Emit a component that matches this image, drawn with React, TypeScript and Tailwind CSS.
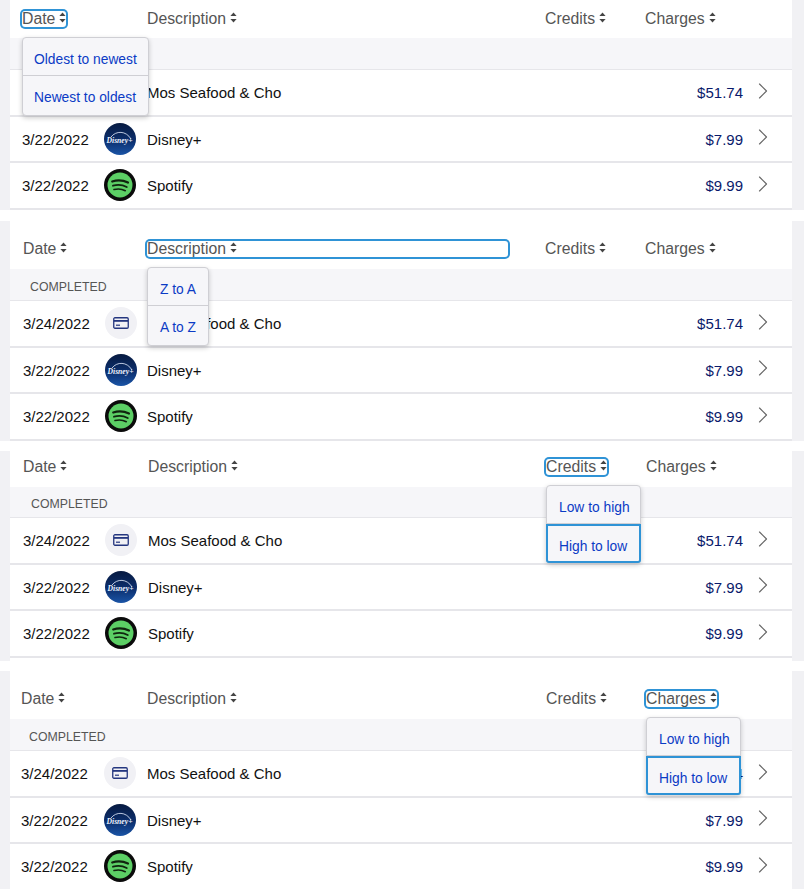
import { ChevronRight } from "lucide-react";

const rows = [
  { date: "3/24/2022", name: "Mos Seafood & Cho", amount: "$51.74", logo: "card" },
  { date: "3/22/2022", name: "Disney+", amount: "$7.99", logo: "disney" },
  { date: "3/22/2022", name: "Spotify", amount: "$9.99", logo: "spotify" },
];

function SortIcon() {
  return (
    <svg width="7" height="11" viewBox="0 0 7 11" className="ml-[4px] mb-[3px] shrink-0">
      <path d="M3.5 0.5 L6.6 4 H0.4 Z" fill="#444" />
      <path d="M3.5 10.5 L6.6 7 H0.4 Z" fill="#444" />
    </svg>
  );
}

function Logo({ kind }: { kind: string }) {
  if (kind === "card") {
    return (
      <div className="flex h-[32px] w-[32px] shrink-0 items-center justify-center rounded-full bg-[#f1f1f5]">
        <svg width="16" height="12" viewBox="0 0 16 12" fill="none">
          <rect x="0.75" y="0.75" width="14.5" height="10.5" rx="1.2" stroke="#24367f" strokeWidth="1.3" />
          <rect x="1" y="3" width="14" height="1.8" fill="#24367f" />
          <rect x="3" y="7.6" width="4" height="1.2" fill="#24367f" />
        </svg>
      </div>
    );
  }
  if (kind === "disney") {
    return (
      <svg width="32" height="32" viewBox="0 0 32 32" className="shrink-0">
        <defs>
          <linearGradient id="disneyBg" x1="0" y1="0" x2="0" y2="1">
            <stop offset="0%" stopColor="#071a40" />
            <stop offset="55%" stopColor="#0c2f6e" />
            <stop offset="100%" stopColor="#1a54a6" />
          </linearGradient>
        </defs>
        <circle cx="16" cy="16" r="16" fill="url(#disneyBg)" />
        <path d="M7 14 C12 7.5 22 7.5 27 16" fill="none" stroke="#e6efff" strokeWidth="0.8" />
        <text x="2.5" y="20" textLength="26" lengthAdjust="spacingAndGlyphs" fontSize="8" fontStyle="italic" fontWeight="700" fontFamily="'Liberation Serif', serif" fill="#eef4ff">
          Disney+
        </text>
      </svg>
    );
  }
  return (
    <svg width="32" height="32" viewBox="0 0 32 32" className="shrink-0">
      <circle cx="16" cy="16" r="16" fill="#0b0b0b" />
      <circle cx="16" cy="16" r="12.5" fill="#5ccf65" />
      <g fill="none" stroke="#10240f" strokeLinecap="round">
        <path d="M8.2 12.5 C13 10.8 19 11 24 13.6" strokeWidth="2.2" />
        <path d="M9 16.7 C13.5 15.4 18.5 15.7 22.7 18" strokeWidth="1.9" />
        <path d="M10 20.5 C13.8 19.6 17.8 19.8 21.3 21.7" strokeWidth="1.6" />
      </g>
    </svg>
  );
}

function Menu({ items, selected, className, itemPad }: { items: string[]; selected?: boolean; className: string; itemPad: string }) {
  return (
    <div className={`absolute z-10 rounded-[4px] border border-[#cfcfd4] bg-[#f6f6f9] text-[13.8px] text-[#0b3bc5] shadow-[0_2px_5px_rgba(0,0,0,0.2)] ${className}`}>
      <div className={`flex h-[38px] items-end whitespace-nowrap border-b border-[#cfcfd4] pb-[4px] ${itemPad}`}>{items[0]}</div>
      <div
        className={`flex h-[39px] items-end whitespace-nowrap ${
          selected ? "-m-px mt-0 rounded-b-[3px] border-2 border-[#2f93d6] pb-[3px] pl-[11px] pr-[10px]" : `pb-[6px] ${itemPad}`
        }`}
      >
        {items[1]}
      </div>
    </div>
  );
}

function HeadCell({ label, open, wide }: { label: string; open: boolean; wide?: boolean }) {
  return (
    <div className={`flex h-[16px] items-center rounded-[3px] ${open ? "ring-2 ring-[#2f93d6]" : ""} ${wide ? "w-[361px]" : "w-fit"}`}>
      <span>{label}</span>
      <SortIcon />
    </div>
  );
}

interface PanelProps {
  open: "date" | "description" | "credits" | "charges";
  headClass: string;
  dateClass: string;
  descClass: string;
  bandClass: string;
  bottomClass: string;
  rowPad: string;
  dateWidth: string;
  nameClass: string;
  menuClass: string;
  itemPad: string;
  items: string[];
  selected?: boolean;
}

function Panel({ open, headClass, dateClass, descClass, bandClass, bottomClass, rowPad, dateWidth, nameClass, menuClass, itemPad, items, selected }: PanelProps) {
  return (
    <div className="bg-[#f1f1f4] pl-[10px] pr-[12px]">
      <div className={`bg-white ${bottomClass}`}>
        <div className={`relative flex items-center text-[15.8px] text-[#555555] ${headClass}`}>
          <div className={`relative ${dateClass}`}>
            <HeadCell label="Date" open={open === "date"} />
            {open === "date" && <Menu items={items} itemPad={itemPad} className={menuClass} />}
          </div>
          <div className={`relative ${descClass}`}>
            <HeadCell label="Description" open={open === "description"} wide={open === "description"} />
            {open === "description" && <Menu items={items} itemPad={itemPad} className={menuClass} />}
          </div>
          <div className="relative w-[100px]">
            <HeadCell label="Credits" open={open === "credits"} />
            {open === "credits" && <Menu items={items} itemPad={itemPad} selected={selected} className={menuClass} />}
          </div>
          <div className="relative">
            <HeadCell label="Charges" open={open === "charges"} />
            {open === "charges" && <Menu items={items} itemPad={itemPad} selected={selected} className={menuClass} />}
          </div>
        </div>
        <div className={`flex items-center border-b border-[#e6e6ea] bg-[#f6f6f9] pt-[5px] text-[12.3px] text-[#555555] ${bandClass}`}>
          COMPLETED
        </div>
        {rows.map((r) => (
          <div key={r.name} className={`flex h-[46.5px] items-center border-b-2 border-[#e6e6ea] text-[15px] text-[#111111] ${rowPad}`}>
            <span className={`shrink-0 pt-[2px] ${dateWidth}`}>{r.date}</span>
            <Logo kind={r.logo} />
            <div className={`flex-1 pt-[2px] ${nameClass}`}>{r.name}</div>
            <div className="pt-[2px] text-[#0a1a6b]">{r.amount}</div>
            <ChevronRight size={28} strokeWidth={1} className="ml-[6px] mr-[15px] -mt-[3px] text-[#666666]" />
          </div>
        ))}
      </div>
    </div>
  );
}

export default function App() {
  return (
    <div className="h-[889px] w-[804px] overflow-hidden bg-white font-['Liberation_Sans',Arial,sans-serif]">
      <Panel
        open="date"
        headClass="h-[38px] pl-[12px]"
        dateClass="w-[125px]"
        descClass="w-[398px]"
        bandClass="h-[32px] pl-[20px]"
        bottomClass="pb-[0.5px]"
        rowPad="pl-[12px]"
        dateWidth="w-[82px]"
        nameClass="ml-[11px]"
        menuClass="left-[0px] top-[26px]"
        itemPad="pl-[11px] pr-[11px]"
        items={["Oldest to newest", "Newest to oldest"]}
      />
      <div className="mt-[11px]">
        <Panel
          open="description"
          headClass="h-[48px] pl-[13px] pt-[7px]"
          dateClass="w-[124px]"
          descClass="w-[398px]"
          bandClass="h-[32px] pl-[20px]"
          bottomClass="pb-[0.5px]"
          rowPad="pl-[13px]"
          dateWidth="w-[82px]"
          nameClass="ml-[10px]"
          menuClass="left-[0px] top-[26.5px]"
          itemPad="pl-[12px] pr-[12px]"
          items={["Z to A", "A to Z"]}
        />
      </div>
      <div className="mt-[10px]">
        <Panel
          open="credits"
          headClass="h-[36px] pl-[13px] pb-[4px]"
          dateClass="w-[125px]"
          descClass="w-[398px]"
          bandClass="h-[31px] pl-[21px]"
          bottomClass="pb-[3.5px]"
          rowPad="pl-[13px]"
          dateWidth="w-[82px]"
          nameClass="ml-[11px]"
          menuClass="left-[0px] top-[26px]"
          itemPad="pl-[12px] pr-[10px]"
          selected
          items={["Low to high", "High to low"]}
        />
      </div>
      <div className="mt-[10px]">
        <Panel
          open="charges"
          headClass="h-[48px] pl-[11px] pt-[7px]"
          dateClass="w-[126px]"
          descClass="w-[399px]"
          bandClass="h-[32px] pl-[19px]"
          bottomClass=""
          rowPad="pl-[11px]"
          dateWidth="w-[83px]"
          nameClass="ml-[11px]"
          menuClass="left-[0px] top-[26.5px]"
          itemPad="pl-[12px] pr-[10px]"
          selected
          items={["Low to high", "High to low"]}
        />
      </div>
    </div>
  );
}
